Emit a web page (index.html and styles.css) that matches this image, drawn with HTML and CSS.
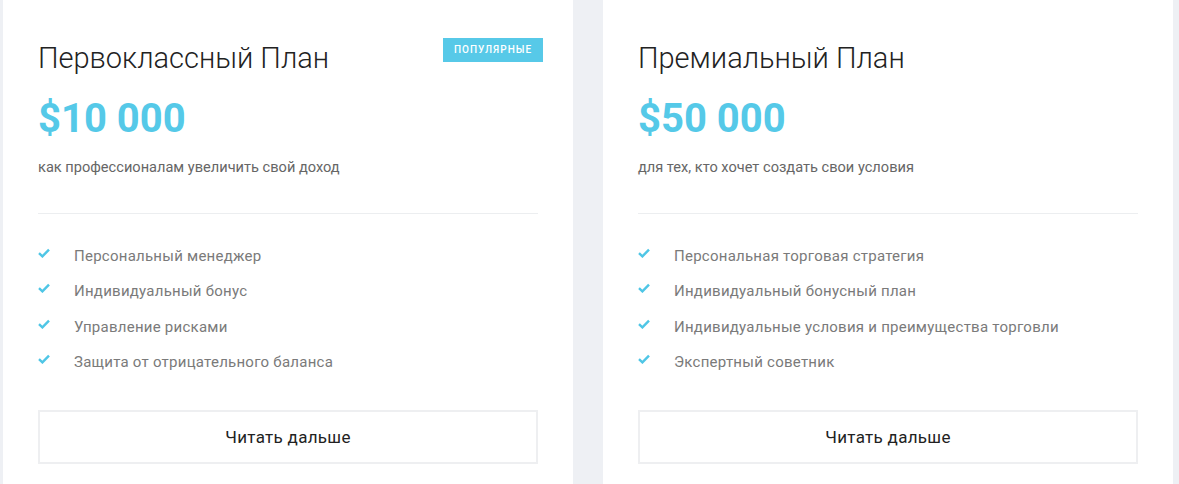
FILE: index.html
```html
<!DOCTYPE html>
<html lang="ru">
<head>
  <meta charset="UTF-8">
  <meta name="viewport" content="width=device-width, initial-scale=1.0">
  <title>Тарифные планы</title>
  <link rel="stylesheet" href="styles.css">
</head>
<body>
  <div class="plans">
    <div class="plan">
      <span class="badge">Популярные</span>
      <h2 class="plan-title">Первоклассный План</h2>
      <div class="plan-price">$10 000</div>
      <p class="plan-desc">как профессионалам увеличить свой доход</p>
      <ul class="features">
        <li><svg class="check" viewBox="0 0 12 10"><path d="M1 5.2 L4.4 8.4 L11 1.6"/></svg>Персональный менеджер</li>
        <li><svg class="check" viewBox="0 0 12 10"><path d="M1 5.2 L4.4 8.4 L11 1.6"/></svg>Индивидуальный бонус</li>
        <li><svg class="check" viewBox="0 0 12 10"><path d="M1 5.2 L4.4 8.4 L11 1.6"/></svg>Управление рисками</li>
        <li><svg class="check" viewBox="0 0 12 10"><path d="M1 5.2 L4.4 8.4 L11 1.6"/></svg>Защита от отрицательного баланса</li>
      </ul>
      <a class="more" href="#">Читать дальше</a>
    </div>

    <div class="plan">
      <h2 class="plan-title">Премиальный План</h2>
      <div class="plan-price">$50 000</div>
      <p class="plan-desc">для тех, кто хочет создать свои условия</p>
      <ul class="features">
        <li><svg class="check" viewBox="0 0 12 10"><path d="M1 5.2 L4.4 8.4 L11 1.6"/></svg>Персональная торговая стратегия</li>
        <li><svg class="check" viewBox="0 0 12 10"><path d="M1 5.2 L4.4 8.4 L11 1.6"/></svg>Индивидуальный бонусный план</li>
        <li><svg class="check" viewBox="0 0 12 10"><path d="M1 5.2 L4.4 8.4 L11 1.6"/></svg>Индивидуальные условия и преимущества торговли</li>
        <li><svg class="check" viewBox="0 0 12 10"><path d="M1 5.2 L4.4 8.4 L11 1.6"/></svg>Экспертный советник</li>
      </ul>
      <a class="more" href="#">Читать дальше</a>
    </div>
  </div>
</body>
</html>
```

FILE: styles.css
```css
body {
  margin: 0;
  background: #eef0f4;
  font-family: Roboto, "Noto Sans", sans-serif;
  overflow: hidden;
}
.plans {
  display: flex;
  gap: 30px;
  padding-left: 3px;
}
.plan {
  position: relative;
  width: 500px;
  padding: 36px 35px 40px;
  background: #fff;
}
.badge {
  position: absolute;
  top: 38px;
  right: 30px;
  width: 100px;
  height: 24px;
  line-height: 24px;
  text-align: center;
  background: #57c9e8;
  color: #fff;
  font-size: 10px;
  font-weight: 500;
  letter-spacing: 1px;
  text-transform: uppercase;
}
.plan-title {
  margin: 0;
  font-size: 29px;
  font-weight: 300;
  color: #222;
  line-height: 44px;
}
.plan-price {
  margin-top: 14px;
  font-size: 40px;
  font-weight: 700;
  color: #55c9e8;
  line-height: 50px;
}
.plan-desc {
  margin: 13px 0 0;
  font-size: 14.6px;
  color: #666;
  line-height: 20px;
  padding-bottom: 36px;
  border-bottom: 1px solid #eceef0;
}
.features {
  list-style: none;
  margin: 0;
  padding: 24px 0 0;
}
.features li {
  display: flex;
  align-items: center;
  height: 35.5px;
  font-size: 15px;
  letter-spacing: 0.25px;
  color: #7a7a7a;
}
.check {
  width: 12px;
  height: 10px;
  margin-right: 24px;
  margin-top: -6px;
  fill: none;
  stroke: #4fc6e6;
  stroke-width: 2.4;
}
.more {
  display: block;
  margin-top: 30px;
  height: 50px;
  line-height: 50px;
  border: 2px solid #eeeff1;
  text-align: center;
  font-size: 17px;
  letter-spacing: 0.3px;
  color: #222;
  text-decoration: none;
}
```
